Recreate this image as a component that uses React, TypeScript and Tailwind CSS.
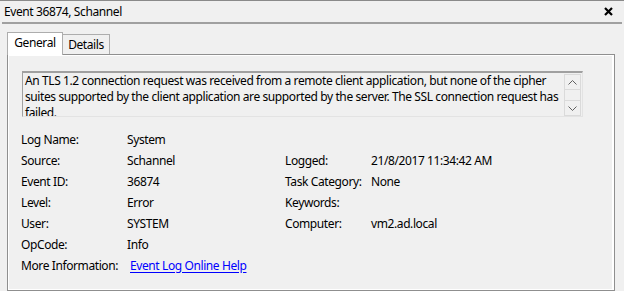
import React from 'react';

const left = [
  ['Log Name:', 'System'],
  ['Source:', 'Schannel'],
  ['Event ID:', '36874'],
  ['Level:', 'Error'],
  ['User:', 'SYSTEM'],
  ['OpCode:', 'Info'],
];

const right: Record<number, [string, string]> = {
  1: ['Logged:', '21/8/2017 11:34:42 AM'],
  2: ['Task Category:', 'None'],
  3: ['Keywords:', ''],
  4: ['Computer:', 'vm2.ad.local'],
};

function Chevron({ up }: { up?: boolean }) {
  return (
    <svg width="9" height="5" viewBox="0 0 9 5" className="block">
      <path d={up ? 'M0.5 4.5 L4.5 0.5 L8.5 4.5' : 'M0.5 0.5 L4.5 4.5 L8.5 0.5'} fill="none" stroke="#606060" strokeWidth="1" />
    </svg>
  );
}

export default function App() {
  return (
    <div
      className="w-[624px] h-[291px] bg-[#f0f0f0] border-t border-[#8a8a8a] text-[12px] tracking-[-0.4px] text-black overflow-hidden"
      style={{ fontFamily: '"Noto Sans", "Open Sans", sans-serif' }}
    >
      {/* Title */}
      <div className="h-[21px] flex items-center justify-between pl-[4px] pr-[11px]">
        <span className="leading-none">Event 36874, Schannel</span>
        <svg width="9" height="9" viewBox="0 0 9 9">
          <path d="M1 1 L8 8 M8 1 L1 8" stroke="#000" strokeWidth="2.2" />
        </svg>
      </div>
      <div className="mx-[2px] h-[2px] bg-[#a0a0a0]" />

      {/* Tabs */}
      <div className="mt-[7px] ml-[7px] mr-[9px]">
        <div className="flex items-end h-[23px] relative z-10">
          <div className="h-[23px] w-[56px] border border-b-0 border-[#adadad] bg-white flex items-center justify-center -mb-px pb-[2px]">
            General
          </div>
          <div className="h-[20px] w-[47px] border border-l-0 border-b-0 border-[#adadad] bg-[#f0f0f0] flex items-center justify-center">
            Details
          </div>
        </div>
        <div className="h-[237px] border border-[#8f8f8f] bg-white p-px pr-[2px]">
          <div className="h-full bg-[#f0f0f0] pt-[15px] pl-[13px] pr-[29px]">
            {/* Description box */}
            <div className="h-[46px] flex border-t-2 border-l border-[#a0a0a0] border-b border-r border-b-[#e3e3e3] border-r-[#e3e3e3]">
              <div className="flex-1 pl-[2px] leading-[16px] overflow-hidden whitespace-nowrap">
                An TLS 1.2 connection request was received from a remote client application, but none of the cipher
                <br />
                suites supported by the client application are supported by the server. The SSL connection request has
                <br />
                failed.
              </div>
              <div className="w-[17px] flex flex-col mt-[1px] mr-[1px]">
                <div className="h-[16px] border border-[#dadada] bg-[#f0f0f0] flex items-center justify-center">
                  <Chevron up />
                </div>
                <div className="flex-1 border-x border-[#dadada]" />
                <div className="h-[16px] border border-[#dadada] bg-[#f0f0f0] flex items-center justify-center">
                  <Chevron />
                </div>
              </div>
            </div>

            {/* Fields */}
            <div className="mt-[12px] -ml-[1px]">
              {left.map(([l, v], i) => (
                <div key={l} className="h-[21px] flex items-center">
                  <span className="w-[106px]">{l}</span>
                  <span className="w-[158px]">{v}</span>
                  {right[i] && (
                    <>
                      <span className="w-[86px]">{right[i][0]}</span>
                      <span>{right[i][1]}</span>
                    </>
                  )}
                </div>
              ))}
              <div className="h-[21px] flex items-center">
                <span className="w-[109px]">More Information:</span>
                <a className="text-[#0000ff] underline underline-offset-2">Event Log Online Help</a>
              </div>
            </div>
          </div>
        </div>
      </div>
    </div>
  );
}
